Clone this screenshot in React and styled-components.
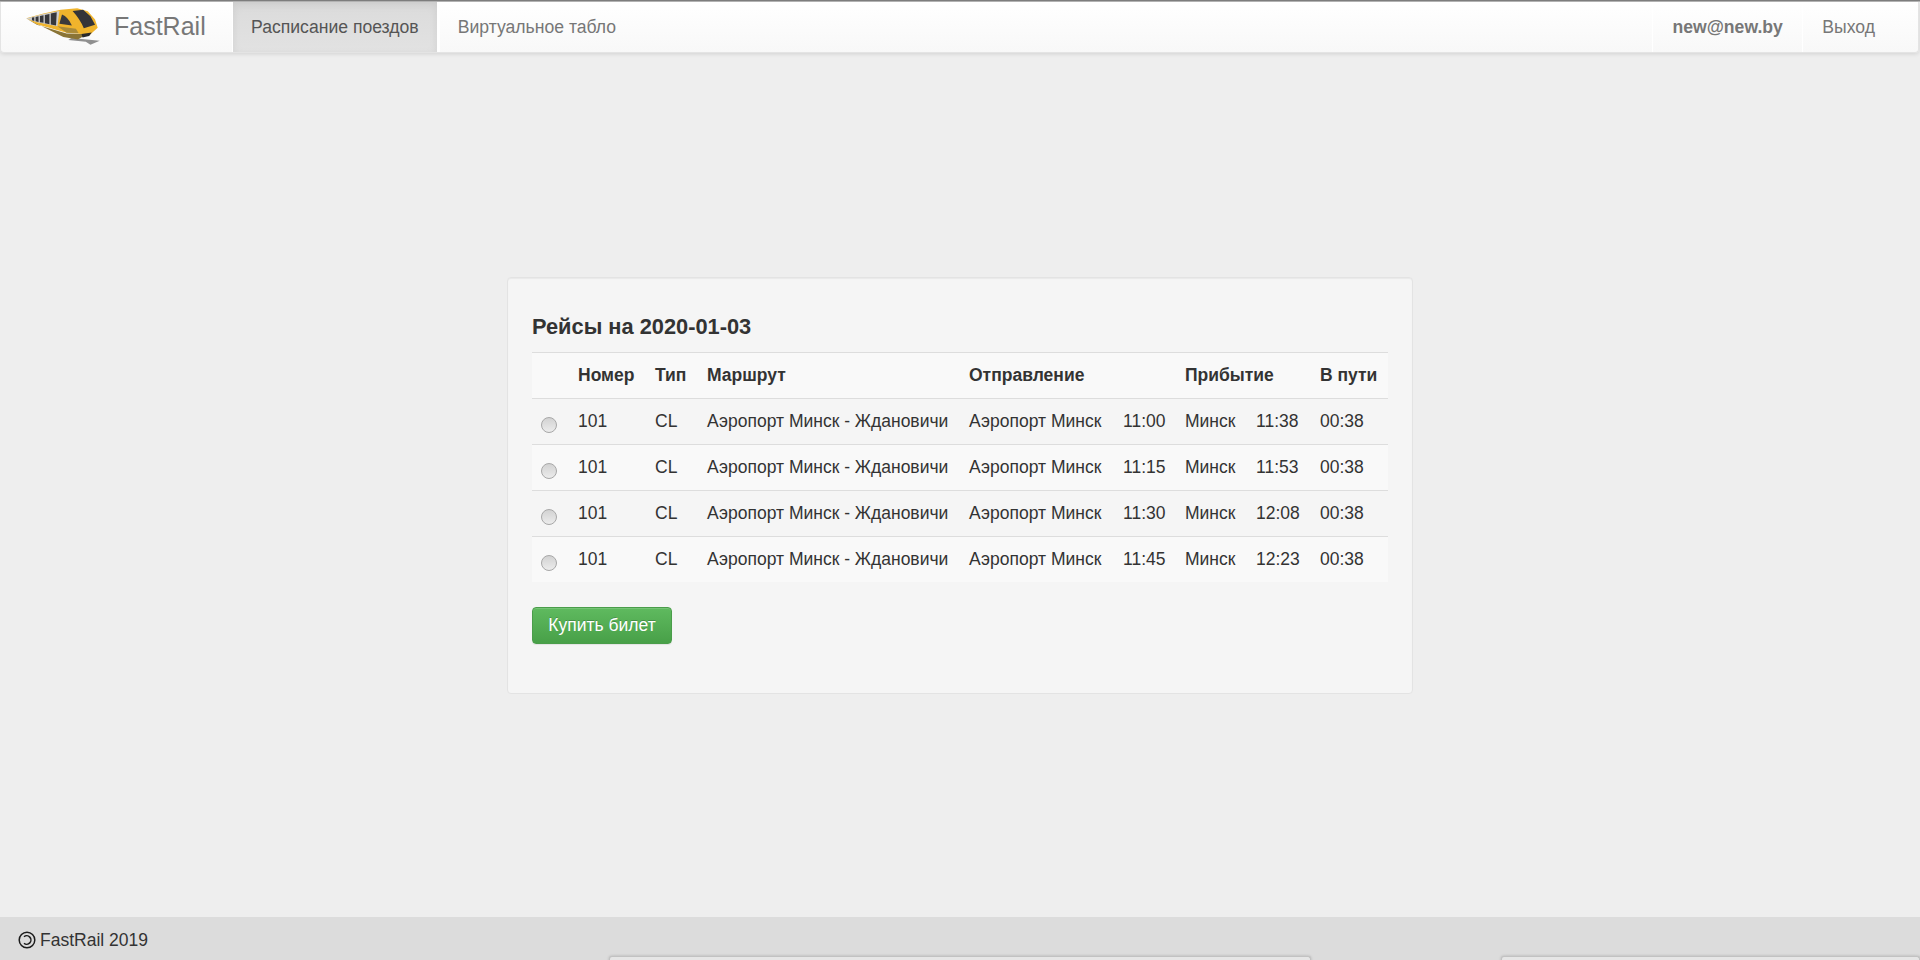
import React from "react";
import styled, { createGlobalStyle } from "styled-components";

const GlobalStyle = createGlobalStyle`
	html, body {
		margin: 0;
		padding: 0;
		background: #eeeeee;
	}
	body {
		font-family: "Liberation Sans", Arial, sans-serif;
		font-size: 17.5px;
		color: #333;
	}
`;

const Page = styled.div`
	height: 960px;
	display: flex;
	flex-direction: column;
	overflow: hidden;
`;

const TopLine = styled.div`
	height: 2px;
	background: linear-gradient(to bottom, #7f7f7f 0%, #7f7f7f 50%, #b8b8b8 50%, #b8b8b8 100%);
`;

const Navbar = styled.nav`
	height: 51px;
	display: flex;
	align-items: stretch;
	box-sizing: border-box;
	margin-right: 1px;
	border: 1px solid #e4e4e4;
	border-top: 0;
	border-radius: 0 0 4px 4px;
	background: linear-gradient(to bottom, #ffffff 0%, #f8f8f8 100%);
	box-shadow: 0 1px 4px rgba(0, 0, 0, 0.12);
`;

const Brand = styled.a`
	width: 231px;
	display: flex;
	align-items: center;
	box-sizing: border-box;
	padding-left: 25px;
	padding-bottom: 1px;
	gap: 13px;
	font-size: 25px;
	color: #777;
`;

const NavItem = styled.a`
	display: flex;
	align-items: center;
	padding: 0 ${(props) => props.$pad || 18}px;
	font-size: 17.6px;
	font-weight: ${(props) => (props.$bold ? 700 : 400)};
	color: ${(props) => (props.$active ? "#555" : "#777")};
	border-left: 1px solid #fff;
	background: ${(props) =>
		props.$active
			? "linear-gradient(to bottom, #dbdbdb 0%, #e2e2e2 100%)"
			: "transparent"};
	box-shadow: ${(props) =>
		props.$active ? "inset 0 3px 9px rgba(0, 0, 0, 0.075)" : "none"};
`;

const ActiveWrap = styled.div`
	display: flex;
	border-right: 2px solid #fff;
`;

const NavRight = styled.div`
	margin-left: auto;
	margin-right: 24px;
	display: flex;
`;

const Main = styled.main`
	flex: 1;
	display: flex;
	align-items: center;
	justify-content: center;
`;

const Panel = styled.section`
	width: 906px;
	height: 417px;
	box-sizing: border-box;
	padding: 34px 24px 0 24px;
	background: #f5f5f5;
	border: 1px solid #e3e3e3;
	border-radius: 4px;
	box-shadow: inset 0 1px 1px rgba(0, 0, 0, 0.05);
`;

const Title = styled.h3`
	margin: 0;
	height: 40px;
	font-size: 21.8px;
	line-height: 30px;
	font-weight: 700;
	color: #333;
`;

const Table = styled.table`
	width: 856px;
	table-layout: fixed;
	border-collapse: collapse;
	border-spacing: 0;
	margin-bottom: 25px;
`;

const Col = styled.col`
	width: ${(props) => props.$w}px;
`;

const Row = styled.tr`
	height: 46px;
	background: ${(props) => (props.$striped ? "#f9f9f9" : "transparent")};
	border-top: 1px solid #dddddd;
`;

const Head = styled.th`
	padding: 0 8px;
	text-align: left;
	font-weight: 700;
	line-height: 22px;
	white-space: nowrap;
`;

const Cell = styled.td`
	padding: 0 8px 1px;
	line-height: 22px;
	white-space: nowrap;
`;

const RadioCell = styled.td`
	padding: 7px 0 0 9px;
`;

const Radio = styled.input.attrs({ type: "radio", name: "trip" })`
	appearance: none;
	display: block;
	width: 16px;
	height: 16px;
	margin: 0;
	border: 1px solid #a8a8a8;
	border-radius: 50%;
	background: linear-gradient(to bottom, #d2d2d2 0%, #ececec 100%);
`;

const BuyButton = styled.button`
	display: block;
	width: 140px;
	height: 37px;
	padding: 0;
	font: inherit;
	color: #fff;
	text-shadow: 0 -1px 0 rgba(0, 0, 0, 0.2);
	border: 1px solid #4a9d4a;
	border-radius: 4px;
	background: linear-gradient(to bottom, #5fba5f 0%, #48a048 100%);
	box-shadow: inset 0 1px 0 rgba(255, 255, 255, 0.15), 0 1px 1px rgba(0, 0, 0, 0.075);
`;

const Footer = styled.footer`
	height: 43px;
	box-sizing: border-box;
	background: #dcdcdc;
	overflow: hidden;
`;

const Copy = styled.div`
	height: 39px;
	display: flex;
	align-items: center;
	padding: 7px 0 0 18px;
	box-sizing: border-box;
	gap: 4px;
	font-size: 17.5px;
	color: #333;
`;

const CopyMark = styled.span`
	width: 18px;
	height: 18px;
	display: flex;
`;

const Shelf = styled.div`
	display: flex;
	padding-left: 609px;
	gap: 190px;
`;

const ShelfCard = styled.div`
	width: ${(props) => props.$w}px;
	height: 6px;
	box-sizing: border-box;
	background: #e6e6e6;
	border: 1px solid #c2c2c2;
	border-bottom: 0;
	border-radius: 3px 3px 0 0;
	box-shadow: 0 0 3px rgba(0, 0, 0, 0.2);
`;

const TrainLogo = () => (
	<svg width="75" height="37" viewBox="78 25 225 112">
		<path d="M215 116 L300 124 L272 136 L258 127 L205 122 Z" fill="#8f8f8f" />
		<path d="M78 57 L110 76 L200 102 L264 103 L234 120 L190 113 Z" fill="#8a7436" />
		<path d="M78 56 L130 42 L182 30 L232 26 L264 35 L286 60 L294 85 L268 108 L235 102 L200 100 L110 74 Z" fill="#f0b42c" />
		<path d="M78 57 L130 43 L178 34 L172 80 L110 68 Z" fill="#cfcfcf" />
		<path d="M95 54 L102 53 L102 64 L95 62 Z M106 52 L115 50 L115 67 L106 65 Z M119 49 L130 47 L130 70 L119 68 Z M134 46 L148 43 L148 74 L134 71 Z M152 42 L170 38 L168 78 L152 75 Z" fill="#37373a" />
		<path d="M178 73 L186 45 Q204 52 216 78 Z" fill="#3a3a3c" />
		<path d="M218 34 L250 30 L272 50 L286 76 L252 86 Q240 58 218 34 Z" fill="#343438" />
		<path d="M172 80 L228 88 L236 101 L200 100 Z" fill="#a88a3a" />
		<path d="M245 104 L276 99 L268 110 L248 114 Z" fill="#2a2a2a" />
	</svg>
);

const CopyIcon = () => (
	<svg width="18" height="18" viewBox="0 0 18 18" fill="none" stroke="#1c1c1c" strokeWidth="1.5">
		<circle cx="9" cy="9" r="7.8" />
		<path d="M6 5.8 A4.2 4.2 0 1 1 6 12.2" />
	</svg>
);

const trips = [
	{ dep: "11:00", arr: "11:38" },
	{ dep: "11:15", arr: "11:53" },
	{ dep: "11:30", arr: "12:08" },
	{ dep: "11:45", arr: "12:23" },
];

const App = () => {
	return (
		<Page>
			<GlobalStyle />
			<TopLine />
			<Navbar>
				<Brand>
					<TrainLogo />
					FastRail
				</Brand>
				<ActiveWrap>
					<NavItem $active>Расписание поездов</NavItem>
				</ActiveWrap>
				<NavItem>Виртуальное табло</NavItem>
				<NavRight>
					<NavItem $bold $pad={19.5}>new@new.by</NavItem>
					<NavItem $pad={19}>Выход</NavItem>
				</NavRight>
			</Navbar>
			<Main>
				<Panel>
					<Title>Рейсы на 2020-01-03</Title>
					<Table>
						<colgroup>
							<Col $w={38} />
							<Col $w={77} />
							<Col $w={52} />
							<Col $w={262} />
							<Col $w={154} />
							<Col $w={62} />
							<Col $w={71} />
							<Col $w={64} />
							<Col $w={76} />
						</colgroup>
						<tbody>
							<Row $striped>
								<Head />
								<Head>Номер</Head>
								<Head>Тип</Head>
								<Head>Маршрут</Head>
								<Head colSpan={2}>Отправление</Head>
								<Head colSpan={2}>Прибытие</Head>
								<Head>В пути</Head>
							</Row>
							{trips.map((trip, i) => (
								<Row key={trip.dep} $striped={i % 2 === 1}>
									<RadioCell>
										<Radio />
									</RadioCell>
									<Cell>101</Cell>
									<Cell>CL</Cell>
									<Cell>Аэропорт Минск - Ждановичи</Cell>
									<Cell>Аэропорт Минск</Cell>
									<Cell>{trip.dep}</Cell>
									<Cell>Минск</Cell>
									<Cell>{trip.arr}</Cell>
									<Cell>00:38</Cell>
								</Row>
							))}
						</tbody>
					</Table>
					<BuyButton>Купить билет</BuyButton>
				</Panel>
			</Main>
			<Footer>
				<Copy>
					<CopyMark>
						<CopyIcon />
					</CopyMark>
					FastRail 2019
				</Copy>
				<Shelf>
					<ShelfCard $w={702} />
					<ShelfCard $w={419} />
				</Shelf>
			</Footer>
		</Page>
	);
};

export default App;
